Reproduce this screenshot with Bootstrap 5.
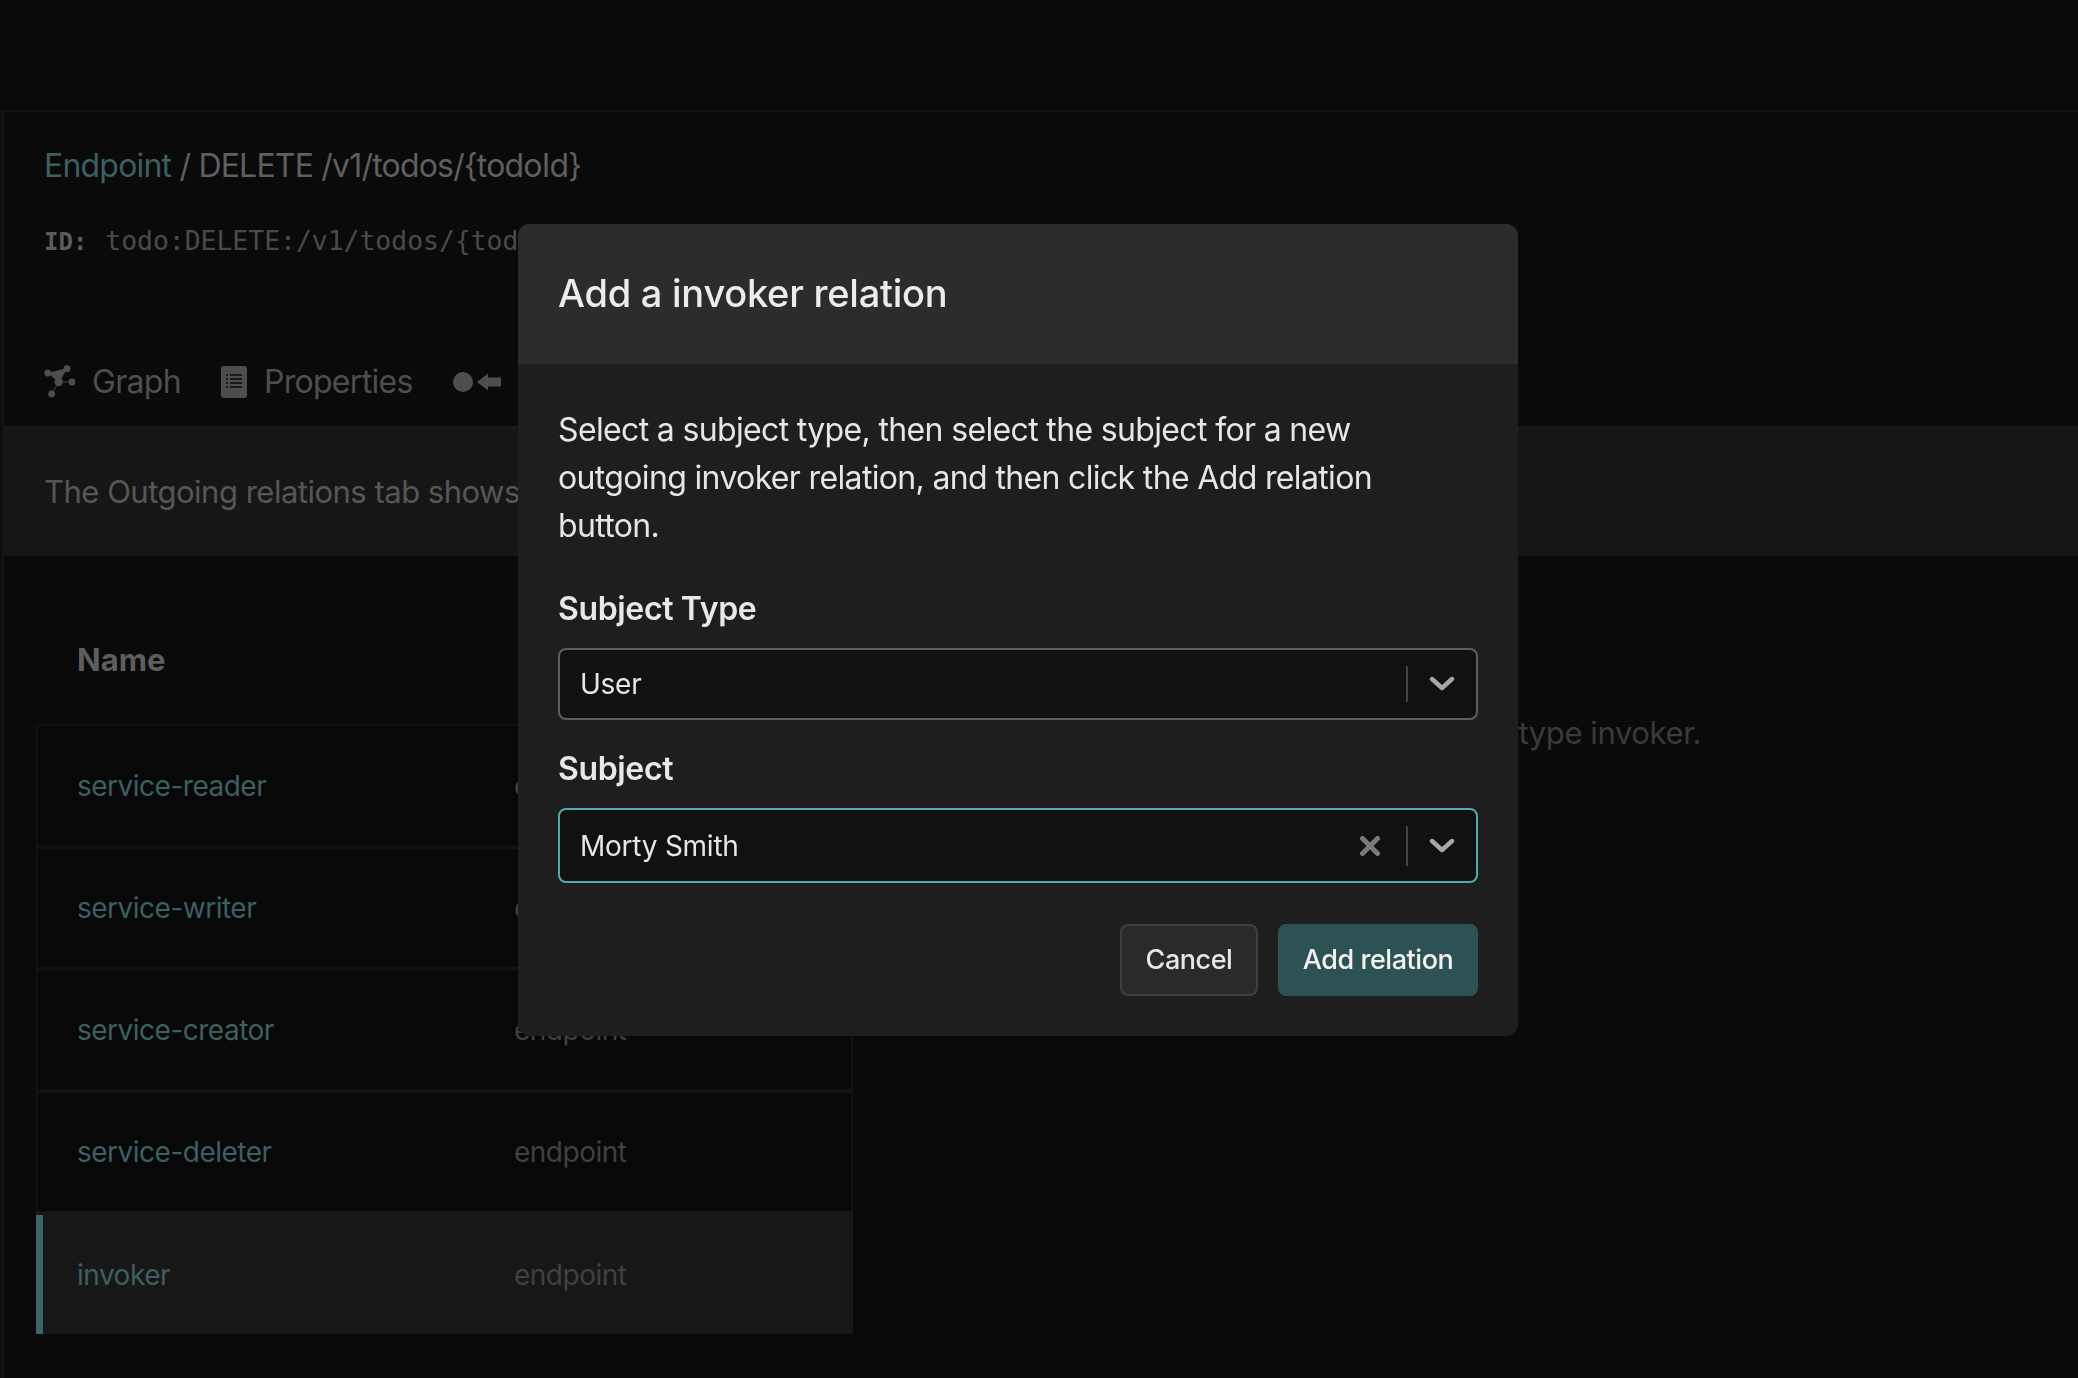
<!DOCTYPE html>
<html lang="en">
<head>
    <meta charset="UTF-8">
    <meta name="viewport" content="width=device-width, initial-scale=1.0">
    <title>Add a invoker relation</title>
    <link href="https://cdn.jsdelivr.net/npm/bootstrap@5.3.0/dist/css/bootstrap.min.css" rel="stylesheet">
    <style>
        html, body { height: 100%; }
        body { background: #0a0a0a; color: #5c5c5c; font-family: Inter, "Noto Sans", sans-serif; font-size: 30px; overflow: hidden; }
        .top-strip { height: 112px; background: #080808; border-bottom: 2px solid #121212; }
        .page-main { border-left: 3px solid #121212; margin-left: 1px; height: 1266px; }
        .page-head { padding: 36px 0 0 40px; height: 317px; border-bottom: 3px solid #1a1a1a; }
        .crumbs { font-size: 32px; line-height: 36px; letter-spacing: -.8px; color: #5f5f5f; white-space: nowrap; }
        .crumbs a, .rel-link { color: #3d5f62; text-decoration: none; }
        .id-line { margin-top: 37px; font-family: "DejaVu Sans Mono", monospace; font-size: 26.4px; line-height: 40px; color: #4a4a4a; white-space: nowrap; }
        .id-line b { color: #5c5c5c; font-size: 24px; margin-right: 2px; }
        .tab-row { margin-top: 100px; gap: 40px; font-size: 32px; line-height: 40px; letter-spacing: -.7px; color: #4e4e4e; white-space: nowrap; }
        .tab-row > span { gap: 15px; }
        .tab-row > span + span { gap: 17px; }
        .tab-row svg { fill: #4e4e4e; display: block; }
        .info-strip { height: 127px; background: #161616; color: #565656; font-size: 31px; letter-spacing: -.5px; padding-left: 40px; white-space: nowrap; overflow: hidden; }
        .list-side { width: 817px; margin-left: 32px; flex: none; }
        .list-head { height: 168px; padding: 41px 0 0 41px; font-weight: 700; font-size: 31px; color: #5e5e5e; }
        .rel-table { --bs-table-bg: transparent; margin: 0; border-collapse: collapse; width: 100%; table-layout: fixed; }
        .rel-row td:first-child { width: 477px; }
        .rel-row td { height: 122px; padding: 0 0 0 39px; vertical-align: middle; border: 2px solid #111; border-bottom: 4px solid #111; font-size: 28px; letter-spacing: -.5px; color: #404040; background: #080808; box-shadow: none; }
        .rel-row td:last-child { padding-left: 0; border-left: 0; }
        .rel-row td:first-child { border-right: 0; }
        .rel-row:has(+ .picked) td { border-bottom-color: #171717; }
        .rel-row.picked td { height: 121px; background: #171717; border-color: #171717; border-bottom: 0; }
        .rel-row.picked td:first-child { border-left-color: #3d6468; box-shadow: inset 5px 0 #3d6468; }
        .empty-side { padding: 154px 377px 0 0; font-size: 31px; letter-spacing: -.4px; line-height: 45px; color: #3a3a3a; white-space: nowrap; text-align: end; }
        .relation-modal { display: block; }
        .relation-modal .modal-dialog { max-width: 1000px; margin: 224px 0 0 518px; }
        .relation-modal .modal-content { background: #1e1e1e; border: 0; border-radius: 12px; color: #e8e8e8; overflow: hidden; }
        .relation-modal .modal-header { height: 140px; background: #2c2c2c; border: 0; border-radius: 0; padding: 0 40px; }
        .relation-modal .modal-title { font-size: 38px; font-weight: 550; letter-spacing: -.24px; color: #ececec; margin-top: -2px; }
        .relation-modal .modal-body { padding: 42px 40px 0; }
        .intro-copy { font-size: 32px; line-height: 48px; letter-spacing: -.65px; margin: 0 0 35px; color: #e6e6e6; }
        .field-label { display: block; font-size: 32px; font-weight: 600; letter-spacing: -.35px; line-height: 48px; margin: 0 0 15px; color: #e8e8e8; }
        .fake-select { height: 72px; background: #111; border: 2px solid #5e5e5e; border-radius: 8px; padding: 0 0 0 20px; font-size: 28px; letter-spacing: -.25px; color: #e6e6e6; margin-bottom: 25px; }
        .fake-select.is-open { height: 75px; border-color: #52a9ae; margin-bottom: 41px; }
        .select-sep { width: 2px; align-self: center; height: 36px; background: #444; }
        .is-open .select-sep { height: 40px; }
        .select-ind { width: 68px; }
        .clear-ind { width: 74px; padding-left: 2px; }
        .relation-modal .modal-footer { padding: 0 40px 40px; border: 0; gap: 20px; }
        .relation-modal .modal-footer > * { margin: 0; }
        .act-btn { height: 72px; font-size: 27px; font-weight: 550; letter-spacing: -.45px; border-radius: 8px; padding: 0; }
        .act-cancel { width: 138px; background: #2a2a2a; border: 2px solid #3f3f3f; color: #e6e6e6; }
        .act-add { width: 200px; background: #2d5254; border: 2px solid #2d5254; color: #f2f2f2; }
    </style>
</head>
<body>
    <div class="top-strip"></div>
    <div class="page-main">
        <div class="page-head">
            <div class="crumbs"><a href="#">Endpoint</a> / DELETE /v1/todos/{todoId}</div>
            <div class="id-line"><b>ID:</b> todo:DELETE:/v1/todos/{todoId}</div>
            <div class="tab-row d-flex align-items-center">
                <span class="d-flex align-items-center">
                    <svg width="33" height="34" viewBox="0 0 33 34">
                        <g stroke="#4e4e4e" stroke-width=".8"><path d="M4 8 15 17 23 3M15 17H28M15 17 8 28"/></g>
                        <circle cx="3.7" cy="8" r="3.4"/><circle cx="23" cy="3.7" r="3.4"/><circle cx="28" cy="17" r="3.4"/><circle cx="14.7" cy="17" r="4.2"/><circle cx="7.7" cy="29" r="3.4"/>
                    </svg>
                    Graph
                </span>
                <span class="d-flex align-items-center">
                    <svg width="26" height="32" viewBox="0 0 26 32">
                        <rect width="26" height="32" rx="3"/>
                        <g stroke="#0a0a0a" stroke-width="1.6"><path d="M5 9H7M9 9H21M5 13H7M9 13H21M5 17H7M9 17H21M5 21H7M9 21H21"/></g>
                    </svg>
                    Properties
                </span>
                <span class="d-flex align-items-center">
                    <svg width="48" height="20" viewBox="0 0 48 20">
                        <circle cx="10" cy="10" r="10"/>
                        <path d="M24 10 35 1.5V5.5H48V14.5H35V18.5Z"/>
                    </svg>
                    Outgoing relations
                </span>
            </div>
        </div>
        <div class="info-strip d-flex align-items-center">The Outgoing relations tab shows the relations from this endpoint to other entities.</div>
        <div class="d-flex">
            <div class="list-side">
                <div class="list-head d-flex align-items-center">
                    <span>Name</span>
                </div>
                <table class="table rel-table">
                    <tbody>
                        <tr class="rel-row"><td><a class="rel-link" href="#">service-reader</a></td><td>endpoint</td></tr>
                        <tr class="rel-row"><td><a class="rel-link" href="#">service-writer</a></td><td>endpoint</td></tr>
                        <tr class="rel-row"><td><a class="rel-link" href="#">service-creator</a></td><td>endpoint</td></tr>
                        <tr class="rel-row"><td><a class="rel-link" href="#">service-deleter</a></td><td>endpoint</td></tr>
                        <tr class="rel-row picked"><td><a class="rel-link" href="#">invoker</a></td><td>endpoint</td></tr>
                    </tbody>
                </table>
            </div>
            <div class="empty-side flex-grow-1">No outgoing relations of type invoker.</div>
        </div>
    </div>

    <div class="modal relation-modal" tabindex="-1">
        <div class="modal-dialog">
            <div class="modal-content">
                <div class="modal-header">
                    <h5 class="modal-title">Add a invoker relation</h5>
                </div>
                <div class="modal-body">
                    <p class="intro-copy">Select a subject type, then select the subject for a new outgoing invoker relation, and then click the Add relation button.</p>
                    <label class="field-label">Subject Type</label>
                    <div class="fake-select d-flex align-items-center">
                        <span class="flex-grow-1">User</span>
                        <span class="select-sep"></span>
                        <span class="select-ind d-flex justify-content-center">
                            <svg width="26" height="16" viewBox="0 0 26 16"><path d="M3 3 13 12 23 3" fill="none" stroke="#a8a8a8" stroke-width="4.4" stroke-linecap="round" stroke-linejoin="round"/></svg>
                        </span>
                    </div>
                    <label class="field-label">Subject</label>
                    <div class="fake-select is-open d-flex align-items-center">
                        <span class="flex-grow-1">Morty Smith</span>
                        <span class="clear-ind d-flex justify-content-center">
                            <svg width="22" height="22" viewBox="0 0 22 22"><path d="M3.5 3.5 18.5 18.5M18.5 3.5 3.5 18.5" fill="none" stroke="#7a7a7a" stroke-width="5" stroke-linecap="round"/></svg>
                        </span>
                        <span class="select-sep"></span>
                        <span class="select-ind d-flex justify-content-center">
                            <svg width="26" height="16" viewBox="0 0 26 16"><path d="M3 3 13 12 23 3" fill="none" stroke="#a8a8a8" stroke-width="4.4" stroke-linecap="round" stroke-linejoin="round"/></svg>
                        </span>
                    </div>
                </div>
                <div class="modal-footer">
                    <button type="button" class="btn act-btn act-cancel">Cancel</button>
                    <button type="button" class="btn act-btn act-add">Add relation</button>
                </div>
            </div>
        </div>
    </div>

    <script src="https://cdn.jsdelivr.net/npm/bootstrap@5.3.0/dist/js/bootstrap.bundle.min.js"></script>
</body>
</html>
